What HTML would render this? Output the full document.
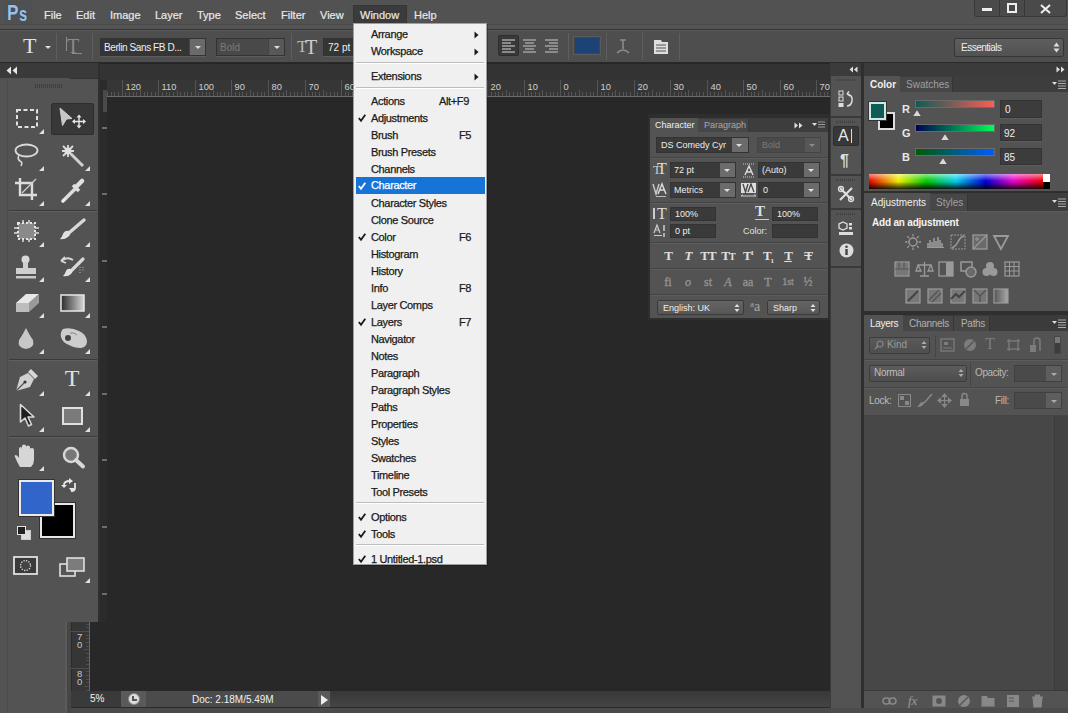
<!DOCTYPE html>
<html><head><meta charset="utf-8">
<style>
*{box-sizing:border-box;margin:0;padding:0}
html,body{width:1068px;height:713px;overflow:hidden;background:#535353;font-family:"Liberation Sans",sans-serif;color:#e6e6e6}
.a{position:absolute}
.t{position:absolute;white-space:nowrap;font-size:11px;line-height:12px}
.mb{position:absolute;top:9px;font-size:11px;line-height:13px;color:#e8e8e8;white-space:nowrap;-webkit-text-stroke:0.2px #e8e8e8}
.sep{position:absolute;width:1px;background:#3e3e3e;border-right:1px solid #5e5e5e}
.fld{position:absolute;background:#3c3c3c;border:1px solid #333;box-shadow:0 1px 0 #5c5c5c}
.dd{position:absolute;background:#6a6a6a;border-left:1px solid #444}
.dd:after{content:"";position:absolute;left:50%;top:50%;margin:-1px 0 0 -3px;border-left:3px solid transparent;border-right:3px solid transparent;border-top:3px solid #ddd}
svg{position:absolute;overflow:visible}
</style></head><body>

<!-- ============ MENU BAR ============ -->
<div class="a" style="left:0;top:0;width:1068px;height:29px;background:#525252"></div>
<div class="a" style="left:0;top:24px;width:1068px;height:1px;background:#4a4a4a"></div><div class="a" style="left:0;top:25px;width:1068px;height:4px;background:#545454"></div>
<div class="a" style="left:0;top:29px;width:1068px;height:1px;background:#353535"></div>
<div class="a" style="left:0;top:30px;width:1068px;height:1px;background:#5a5a5a"></div>
<div class="a" style="left:4px;top:1px;width:28px;height:23px;background:rgba(40,60,90,0.08)"></div><div class="a" style="left:7px;top:2px;font:bold 22px/22px 'Liberation Sans',sans-serif;color:#9cc0e8;transform:scaleX(0.78);transform-origin:0 0;text-shadow:0 0 1px #1c3a66">P</div><div class="a" style="left:19px;top:3px;font:bold 21px/21px 'Liberation Sans',sans-serif;color:#9cc0e8;transform:scaleX(0.7);transform-origin:0 0;text-shadow:0 0 1px #1c3a66">s</div>
<div class="mb" style="left:44px">File</div>
<div class="mb" style="left:76px">Edit</div>
<div class="mb" style="left:110px">Image</div>
<div class="mb" style="left:155px">Layer</div>
<div class="mb" style="left:197px">Type</div>
<div class="mb" style="left:235px">Select</div>
<div class="mb" style="left:281px">Filter</div>
<div class="mb" style="left:320px">View</div>
<div class="a" style="left:353px;top:5px;width:54px;height:19px;background:#3b3b3b;border:1px solid #363636"></div>
<div class="mb" style="left:360px">Window</div>
<div class="mb" style="left:414px">Help</div>
<!-- window controls -->
<div class="a" style="left:974px;top:0;width:93px;height:17px;background:#4a4a4a;border:1px solid #383838;border-top:none;border-radius:0 0 3px 3px"></div>
<div class="a" style="left:999px;top:0;width:1px;height:16px;background:#383838"></div>
<div class="a" style="left:1024px;top:0;width:1px;height:16px;background:#383838"></div>
<div class="a" style="left:982px;top:8px;width:10px;height:3px;background:#eee"></div>
<div class="a" style="left:1007px;top:3px;width:10px;height:10px;border:2px solid #eee"></div>
<svg style="left:1040px;top:4px" width="11" height="10"><path d="M1 1L10 9M10 1L1 9" stroke="#eee" stroke-width="2"/></svg>

<!-- ============ OPTIONS BAR ============ -->
<div class="a" style="left:0;top:31px;width:1068px;height:32px;background:#4e4e4e"></div>

<!-- T tool icon -->
<div class="a" style="left:23px;top:35px;font:22px/22px 'Liberation Serif',serif;color:#e0e0e0">T</div>
<div class="a" style="left:45px;top:46px;border-left:3px solid transparent;border-right:3px solid transparent;border-top:3px solid #ddd"></div>
<div class="sep" style="left:56px;top:33px;height:27px"></div>
<div class="a" style="left:67px;top:36px;font:20px/20px 'Liberation Serif',serif;color:#8a8a8a">T</div>
<div class="a" style="left:66px;top:37px;width:1px;height:14px;background:#8a8a8a"></div>
<div class="a" style="left:72px;top:53px;width:10px;height:1px;background:#8a8a8a"></div>
<div class="sep" style="left:92px;top:33px;height:27px"></div>
<!-- font family -->
<div class="fld" style="left:100px;top:38px;width:106px;height:18px;background:#353535"></div>
<div class="t" style="left:104px;top:42px;font-size:10px;letter-spacing:-0.4px;color:#f0f0f0">Berlin Sans FB D...</div>
<div class="dd" style="left:189px;top:39px;width:16px;height:16px"></div>
<!-- bold -->
<div class="fld" style="left:216px;top:38px;width:69px;height:18px;background:#494949"></div>
<div class="t" style="left:220px;top:42px;font-size:10px;color:#7a7a7a">Bold</div>
<div class="dd" style="left:268px;top:39px;width:16px;height:16px;background:#585858"></div>
<div class="sep" style="left:291px;top:33px;height:27px"></div>
<!-- size icon -->
<div class="a" style="left:297px;top:38px;font:17px/17px 'Liberation Serif',serif;color:#bbb">T</div>
<div class="a" style="left:305px;top:37px;font:20px/20px 'Liberation Serif',serif;color:#ccc">T</div>
<div class="fld" style="left:323px;top:38px;width:40px;height:18px;background:#353535"></div>
<div class="t" style="left:328px;top:42px;font-size:10px;color:#f0f0f0">72 pt</div>
<!-- align -->
<div class="a" style="left:498px;top:35px;width:21px;height:21px;background:#383838;border:1px solid #2e2e2e;border-radius:2px"></div>
<svg style="left:502px;top:39px" width="13" height="14"><path d="M0 1H13M0 4H9M0 7H13M0 10H9M0 13H13" stroke="#dcdcdc" stroke-width="1.2"/></svg>
<svg style="left:523px;top:39px" width="13" height="14"><path d="M0 1H13M2 4H11M0 7H13M2 10H11M0 13H13" stroke="#c8c8c8" stroke-width="1.2"/></svg>
<svg style="left:545px;top:39px" width="13" height="14"><path d="M0 1H13M4 4H13M0 7H13M4 10H13M0 13H13" stroke="#c8c8c8" stroke-width="1.2"/></svg>
<div class="sep" style="left:568px;top:33px;height:27px"></div>
<div class="a" style="left:574px;top:37px;width:26px;height:17px;background:#1d4276;border:1px solid #444;box-shadow:0 0 0 1px #5a5a5a"></div>
<div class="sep" style="left:606px;top:33px;height:27px"></div>
<svg style="left:614px;top:38px" width="18" height="18"><path d="M6 2H12M9 2V11M3 15Q9 9 15 15" stroke="#8c8c8c" stroke-width="1.6" fill="none"/></svg>
<div class="sep" style="left:642px;top:33px;height:27px"></div>
<svg style="left:653px;top:39px" width="16" height="16"><path d="M1 1H8L9 3H15V15H1Z" fill="#ddd"/><path d="M3 6H13M3 9H13M3 12H13" stroke="#555" stroke-width="1"/></svg>
<div class="sep" style="left:679px;top:33px;height:27px"></div>
<!-- essentials -->
<div class="a" style="left:954px;top:38px;width:110px;height:19px;background:linear-gradient(#5e5e5e,#515151);border:1px solid #363636;border-radius:2px"></div>
<div class="t" style="left:961px;top:42px;font-size:10px;letter-spacing:-0.5px;color:#eee">Essentials</div>
<svg style="left:1053px;top:42px" width="7" height="11"><path d="M0.5 4.5L3.5 0.5L6.5 4.5ZM0.5 6.5L3.5 10.5L6.5 6.5Z" fill="#ddd"/></svg>
<div class="a" style="left:0;top:62px;width:1068px;height:1px;background:#2a2a2a"></div>

<!-- ============ HEADER STRIP / DOC ============ -->
<div class="a" style="left:0;top:63px;width:1068px;height:15px;background:#3a3a3a"></div>
<div class="a" style="left:98px;top:63px;width:732px;height:17px;background:#333333;border-top:1px solid #262626"></div>
<div class="a" style="left:830px;top:63px;width:238px;height:13px;background:#3b3b3b"></div>
<div class="a" style="left:90px;top:97px;width:740px;height:594px;background:#282828"></div>
<div class="a" style="left:70px;top:78px;width:33px;height:19px;background:#333"></div>
<svg style="left:103px;top:80px" width="727" height="17"><rect width="727" height="17" fill="#363636"/><path d="M0.5 10V16 M4.5 12V16 M8.5 12V16 M11.5 12V16 M15.5 12V16 M19.5 0V17 M22.5 12V16 M26.5 12V16 M30.5 12V16 M33.5 12V16 M37.5 10V16 M41.5 12V16 M44.5 12V16 M48.5 12V16 M52.5 12V16 M55.5 0V17 M59.5 12V16 M63.5 12V16 M66.5 12V16 M70.5 12V16 M74.5 10V16 M77.5 12V16 M81.5 12V16 M84.5 12V16 M88.5 12V16 M92.5 0V17 M95.5 12V16 M99.5 12V16 M103.5 12V16 M106.5 12V16 M110.5 10V16 M114.5 12V16 M117.5 12V16 M121.5 12V16 M125.5 12V16 M128.5 0V17 M132.5 12V16 M136.5 12V16 M139.5 12V16 M143.5 12V16 M147.5 10V16 M150.5 12V16 M154.5 12V16 M158.5 12V16 M161.5 12V16 M165.5 0V17 M169.5 12V16 M172.5 12V16 M176.5 12V16 M180.5 12V16 M183.5 10V16 M187.5 12V16 M191.5 12V16 M194.5 12V16 M198.5 12V16 M202.5 0V17 M205.5 12V16 M209.5 12V16 M212.5 12V16 M216.5 12V16 M220.5 10V16 M223.5 12V16 M227.5 12V16 M231.5 12V16 M234.5 12V16 M238.5 0V17 M242.5 12V16 M245.5 12V16 M249.5 12V16 M253.5 12V16 M256.5 10V16 M260.5 12V16 M264.5 12V16 M267.5 12V16 M271.5 12V16 M275.5 0V17 M278.5 12V16 M282.5 12V16 M286.5 12V16 M289.5 12V16 M293.5 10V16 M297.5 12V16 M300.5 12V16 M304.5 12V16 M308.5 12V16 M311.5 0V17 M315.5 12V16 M319.5 12V16 M322.5 12V16 M326.5 12V16 M330.5 10V16 M333.5 12V16 M337.5 12V16 M340.5 12V16 M344.5 12V16 M348.5 0V17 M351.5 12V16 M355.5 12V16 M359.5 12V16 M362.5 12V16 M366.5 10V16 M370.5 12V16 M373.5 12V16 M377.5 12V16 M381.5 12V16 M384.5 0V17 M388.5 12V16 M392.5 12V16 M395.5 12V16 M399.5 12V16 M403.5 10V16 M406.5 12V16 M410.5 12V16 M414.5 12V16 M417.5 12V16 M421.5 0V17 M425.5 12V16 M428.5 12V16 M432.5 12V16 M436.5 12V16 M439.5 10V16 M443.5 12V16 M447.5 12V16 M450.5 12V16 M454.5 12V16 M457.5 0V17 M461.5 12V16 M465.5 12V16 M468.5 12V16 M472.5 12V16 M476.5 10V16 M479.5 12V16 M483.5 12V16 M487.5 12V16 M490.5 12V16 M494.5 0V17 M498.5 12V16 M501.5 12V16 M505.5 12V16 M509.5 12V16 M512.5 10V16 M516.5 12V16 M520.5 12V16 M523.5 12V16 M527.5 12V16 M531.5 0V17 M534.5 12V16 M538.5 12V16 M542.5 12V16 M545.5 12V16 M549.5 10V16 M553.5 12V16 M556.5 12V16 M560.5 12V16 M564.5 12V16 M567.5 0V17 M571.5 12V16 M575.5 12V16 M578.5 12V16 M582.5 12V16 M585.5 10V16 M589.5 12V16 M593.5 12V16 M596.5 12V16 M600.5 12V16 M604.5 0V17 M607.5 12V16 M611.5 12V16 M615.5 12V16 M618.5 12V16 M622.5 10V16 M626.5 12V16 M629.5 12V16 M633.5 12V16 M637.5 12V16 M640.5 0V17 M644.5 12V16 M648.5 12V16 M651.5 12V16 M655.5 12V16 M659.5 10V16 M662.5 12V16 M666.5 12V16 M670.5 12V16 M673.5 12V16 M677.5 0V17 M681.5 12V16 M684.5 12V16 M688.5 12V16 M692.5 12V16 M695.5 10V16 M699.5 12V16 M703.5 12V16 M706.5 12V16 M710.5 12V16 M713.5 0V17 M717.5 12V16 M721.5 12V16 M724.5 12V16" stroke="#555555" stroke-width="1"/><rect y="16" width="727" height="1" fill="#6c6c6c"/><g font-family="Liberation Sans" font-size="9.3" fill="#d0d0d0"><text x="22.5" y="9.6">120</text><text x="58.5" y="9.6">110</text><text x="95.5" y="9.6">100</text><text x="131.5" y="9.6">90</text><text x="168.5" y="9.6">80</text><text x="205.5" y="9.6">70</text><text x="241.5" y="9.6">60</text><text x="278.5" y="9.6">50</text><text x="314.5" y="9.6">40</text><text x="351.5" y="9.6">30</text><text x="387.5" y="9.6">20</text><text x="424.5" y="9.6">10</text><text x="460.5" y="9.6">0</text><text x="497.5" y="9.6">10</text><text x="534.5" y="9.6">20</text><text x="570.5" y="9.6">30</text><text x="607.5" y="9.6">40</text><text x="643.5" y="9.6">50</text><text x="680.5" y="9.6">60</text><text x="716.5" y="9.6">70</text></g></svg>
<svg style="left:71px;top:622px" width="19" height="69"><rect width="19" height="69" fill="#363636"/><rect width="1" height="69" fill="#2a2a2a"/><path d="M15 2.5H18 M15 5.5H18 M0 9.5H19 M15 13.5H18 M15 16.5H18 M15 20.5H18 M15 24.5H18 M13 27.5H18 M15 31.5H18 M15 35.5H18 M15 38.5H18 M15 42.5H18 M0 46.5H19 M15 49.5H18 M15 53.5H18 M15 57.5H18 M15 60.5H18 M13 64.5H18 M15 68.5H18" stroke="#4e4e4e" stroke-width="1"/><rect x="18" width="1" height="69" fill="#666"/><g font-family="Liberation Sans" font-size="9.5" fill="#c8c8c8"><text x="6" y="18.1">7</text><text x="6" y="26.1">0</text><text x="6" y="55.1">8</text><text x="6" y="63.1">0</text></g></svg>
<div class="a" style="left:0;top:622px;width:71px;height:91px;background:#535353"></div>
<div class="a" style="left:65px;top:622px;width:2px;height:91px;background:#5b5b5b"></div>
<div class="a" style="left:67px;top:622px;width:4px;height:91px;background:#464646"></div>
<!-- status bar -->
<div class="a" style="left:71px;top:691px;width:759px;height:17px;background:linear-gradient(#383838,#454545)"></div>
<div class="a" style="left:71px;top:691px;width:50px;height:17px;background:#3a3a3a"></div>
<div class="t" style="left:90px;top:693px;font-size:10px;color:#f2f2f2">5%</div>
<div class="a" style="left:121px;top:691px;width:25px;height:17px;background:#5a5a5a"></div>
<div class="a" style="left:128px;top:693px;width:12px;height:12px;border-radius:50%;background:#ddd;border:1px solid #888"></div>
<div class="a" style="left:132px;top:696px;width:5px;height:5px;border-left:2px solid #555;border-bottom:2px solid #555"></div>
<div class="a" style="left:146px;top:691px;width:172px;height:17px;background:#4b4b4b"></div>
<div class="t" style="left:192px;top:694px;font-size:10px;color:#f0f0f0">Doc: 2.18M/5.49M</div>
<div class="a" style="left:318px;top:691px;width:12px;height:17px;background:#5a5a5a"></div>
<div class="a" style="left:321px;top:695px;border-top:5px solid transparent;border-bottom:5px solid transparent;border-left:7px solid #eee"></div>
<div class="a" style="left:71px;top:707px;width:759px;height:1px;background:#2a2a2a"></div>
<div class="a" style="left:71px;top:708px;width:759px;height:5px;background:#4a4a4a"></div>

<!-- ============ TOOLBAR ============ -->
<div class="a" style="left:0;top:79px;width:98px;height:543px;background:#535353"></div>
<div class="a" style="left:7px;top:79px;width:1px;height:634px;background:#4b4b4b"></div>
<div class="a" style="left:98px;top:63px;width:2px;height:559px;background:#2f2f2f"></div>
<div class="a" style="left:100px;top:80px;width:7px;height:542px;background:#2b2b2b"></div>
<div class="a" style="left:103px;top:90px;width:4px;height:22px;background:#4a4a4a"></div>
<div class="a" style="left:102px;top:127px;width:5px;height:2px;background:#6e6e6e"></div>
<div class="a" style="left:102px;top:193px;width:5px;height:2px;background:#6e6e6e"></div>
<div class="a" style="left:102px;top:260px;width:5px;height:2px;background:#6e6e6e"></div>
<div class="a" style="left:102px;top:326px;width:5px;height:2px;background:#6e6e6e"></div>
<div class="a" style="left:102px;top:393px;width:5px;height:2px;background:#6e6e6e"></div>
<div class="a" style="left:102px;top:459px;width:5px;height:2px;background:#6e6e6e"></div>
<div class="a" style="left:102px;top:526px;width:5px;height:2px;background:#6e6e6e"></div>
<div class="a" style="left:102px;top:593px;width:5px;height:2px;background:#6e6e6e"></div>
<svg style="left:6px;top:66px" width="12" height="9"><path d="M5 0.5L0.5 4.5L5 8.5ZM11 0.5L6.5 4.5L11 8.5Z" fill="#e8e8e8"/></svg>
<svg style="left:35px;top:84px" width="28" height="4"><path d="M0 1H28M0 3H28" stroke="#2c2c2c" stroke-width="1" stroke-dasharray="1 1"/></svg>
<!-- separators -->
<div class="a" style="left:9px;top:210px;width:88px;height:1px;background:#3a3a3a"></div>
<div class="a" style="left:9px;top:211px;width:88px;height:1px;background:#606060"></div>
<div class="a" style="left:9px;top:359px;width:88px;height:1px;background:#3a3a3a"></div>
<div class="a" style="left:9px;top:360px;width:88px;height:1px;background:#606060"></div>
<div class="a" style="left:9px;top:436px;width:88px;height:1px;background:#3a3a3a"></div>
<div class="a" style="left:9px;top:437px;width:88px;height:1px;background:#606060"></div>
<!-- marquee -->
<svg style="left:16px;top:109px" width="22" height="19"><rect x="1" y="1" width="20" height="17" fill="#4a4a4a" stroke="#e0e0e0" stroke-width="2" stroke-dasharray="4 2.5"/></svg>
<!-- move selected -->
<div class="a" style="left:51px;top:103px;width:43px;height:32px;background:#383838;border:1px solid #2e2e2e;border-radius:2px"></div>
<svg style="left:58px;top:107px" width="28" height="22"><path d="M2 1L14 11.5L8.5 12L4.5 18.5Z" fill="#c8c8c8" stroke="#d0d0d0" stroke-width="1" stroke-linejoin="round"/><path d="M21 9V20M15.5 14.5H26.5" stroke="#e6e6e6" stroke-width="1.4"/><path d="M21 7.5L18.5 10.5H23.5ZM21 21.5L18.5 18.5H23.5ZM14 14.5L17 12V17ZM28 14.5L25 12V17Z" fill="#e6e6e6"/></svg>
<!-- lasso -->
<svg style="left:14px;top:143px" width="26" height="24"><ellipse cx="12.5" cy="7.5" rx="11" ry="6" fill="none" stroke="#d8d8d8" stroke-width="1.8"/><path d="M5 12Q3 16 6 18Q9 19 7 23" fill="none" stroke="#d8d8d8" stroke-width="1.6"/></svg>
<!-- magic wand -->
<svg style="left:59px;top:143px" width="27" height="25"><path d="M9 2V14M3 8H15M4 3L14 13M14 3L4 13" stroke="#dcdcdc" stroke-width="1.8"/><circle cx="9" cy="8" r="3.5" fill="#e0e0e0"/><path d="M12 11L24 23" stroke="#d0d0d0" stroke-width="3"/></svg>
<!-- crop -->
<svg style="left:14px;top:177px" width="24" height="24"><path d="M6 1V18H23M1 6H18V23" fill="none" stroke="#dcdcdc" stroke-width="2.4"/><path d="M8 16L22 2" stroke="#cfcfcf" stroke-width="1.3"/></svg>
<!-- eyedropper -->
<svg style="left:60px;top:179px" width="25" height="24"><path d="M3 22L15 10" stroke="#dcdcdc" stroke-width="3.5" stroke-linecap="round"/><path d="M2 23L5 20" stroke="#eee" stroke-width="2"/><path d="M13 6L19 12" stroke="#e0e0e0" stroke-width="3.5"/><path d="M17 7L22 2" stroke="#e0e0e0" stroke-width="4.5" stroke-linecap="round"/></svg>
<!-- healing / patch -->
<svg style="left:14px;top:220px" width="25" height="22"><rect x="4" y="3" width="17" height="16" fill="#8a8a8a"/><path d="M4 3H21V19H4Z" fill="none" stroke="#e6e6e6" stroke-width="2" stroke-dasharray="2 2"/><path d="M0 8H4M0 13H4M21 8H25M21 13H25M9 0V3M15 0V3M9 19V22M15 19V22" stroke="#dedede" stroke-width="1.5"/></svg>
<!-- brush -->
<svg style="left:59px;top:219px" width="27" height="23"><path d="M11 13L25 1" stroke="#d8d8d8" stroke-width="3.4" stroke-linecap="round"/><path d="M1 20Q5 21 9 18Q13 15 10 12Q6 11 4 15Q3 18 1 20Z" fill="#e0e0e0"/></svg>
<!-- stamp -->
<svg style="left:15px;top:255px" width="22" height="25"><circle cx="10.5" cy="4.5" r="4" fill="#d8d8d8"/><rect x="8" y="7" width="5" height="7" fill="#d0d0d0"/><rect x="1" y="13" width="20" height="6" fill="#cfcfcf"/><rect x="1" y="21" width="20" height="2.5" fill="#c8c8c8"/></svg>
<!-- history brush -->
<svg style="left:60px;top:255px" width="26" height="24"><path d="M1 6Q7 1 13 5M1 6L5 2M1 6L6 8" fill="none" stroke="#d8d8d8" stroke-width="1.8"/><path d="M12 15L23 4" stroke="#d8d8d8" stroke-width="3.2" stroke-linecap="round"/><path d="M3 21Q8 22 11 19Q14 16 11 14Q7 13 6 16Q5 19 3 21Z" fill="#e0e0e0"/><path d="M20 12V19M23 12V17" stroke="#bbb" stroke-width="1" stroke-dasharray="1 1.5"/></svg>
<!-- eraser -->
<svg style="left:15px;top:292px" width="25" height="21"><path d="M1 11L11 2H24L14 11Z" fill="#e8e8e8"/><path d="M1 11H14V20H1Z" fill="#bdbdbd"/><path d="M14 11L24 2V11L14 20Z" fill="#9a9a9a"/></svg>
<!-- gradient -->
<svg style="left:60px;top:294px" width="25" height="18"><defs><linearGradient id="gr" x1="0" x2="1"><stop offset="0" stop-color="#2a2a2a"/><stop offset="1" stop-color="#d8d8d8"/></linearGradient></defs><rect x="1" y="1" width="23" height="16" fill="url(#gr)" stroke="#e0e0e0" stroke-width="1.6"/></svg>
<!-- blur drop -->
<svg style="left:16px;top:327px" width="20" height="23"><path d="M10 1Q14 9 17 13Q19 21 10 22Q1 21 3 13Q6 9 10 1Z" fill="#c8c8c8"/></svg>
<!-- dodge / sponge -->
<svg style="left:59px;top:327px" width="29" height="22"><path d="M4 2Q12 0 20 4Q27 7 28 14Q28 20 22 21Q15 21 10 18Q3 15 2 10Q1 5 4 2Z" fill="#cdcdcd"/><circle cx="9" cy="11" r="3" fill="#444"/><path d="M11 6Q15 5 18 8" stroke="#888" stroke-width="1" fill="none"/></svg>
<!-- pen -->
<svg style="left:15px;top:368px" width="24" height="24"><path d="M16 1L23 8L20 11L13 4Z" fill="#d8d8d8"/><path d="M13 5L19 11L15 19L1 23L5 9Z" fill="#d0d0d0"/><path d="M1 23L9 15" stroke="#555" stroke-width="1.2"/><circle cx="10" cy="14" r="1.6" fill="#333"/></svg>
<!-- type -->
<div class="a" style="left:61px;top:366px;font:24px/24px 'Liberation Serif',serif;color:#e0e0e0;width:22px;text-align:center">T</div>
<!-- path select -->
<svg style="left:19px;top:403px" width="17" height="24"><path d="M1.5 1.5V19L6 15L9.5 23L12.5 21.5L9 14H15Z" fill="#1e1e1e" stroke="#d8d8d8" stroke-width="1.6" stroke-linejoin="round"/></svg>
<!-- rectangle -->
<svg style="left:62px;top:407px" width="21" height="18"><rect x="1" y="1" width="19" height="16" fill="#7a7a7a" stroke="#e0e0e0" stroke-width="2"/></svg>
<!-- hand -->
<svg style="left:14px;top:444px" width="24" height="24"><path d="M6 23Q3 18 1 13Q0 11 2 11Q4 12 5 14V5Q5 3 7 3Q8 3 8 5V11V2Q8 0.5 10 0.5Q12 0.5 12 2V11V3Q12 1.5 14 1.5Q16 1.5 16 3V11V5Q16 4 18 4Q20 4 20 6V16Q20 20 17 23Z" fill="#d6d6d6"/></svg>
<!-- zoom -->
<svg style="left:62px;top:446px" width="23" height="22"><circle cx="9" cy="9" r="7" fill="#777" stroke="#d8d8d8" stroke-width="2.4"/><path d="M14 14L21 20.5" stroke="#d8d8d8" stroke-width="4" stroke-linecap="round"/></svg>
<!-- colors -->
<svg style="left:61px;top:478px" width="17" height="16"><path d="M3 7Q3 3 9 3" fill="none" stroke="#e6e6e6" stroke-width="1.8"/><path d="M8 0L12 3L8 6Z" fill="#e6e6e6"/><path d="M14 5V10Q14 13 10 13" fill="none" stroke="#e6e6e6" stroke-width="1.8"/><path d="M11 10L14 14L17 10Z" fill="#e6e6e6" transform="translate(-3 0)"/><path d="M0 7L3 10L6 7Z" fill="#e6e6e6"/></svg>
<div class="a" style="left:40px;top:503px;width:35px;height:35px;background:#000;border:2px solid #e8e8e8;box-shadow:0 0 0 1px #333"></div>
<div class="a" style="left:19px;top:480px;width:35px;height:36px;background:#3265c9;border:2px solid #eaeaea;box-shadow:0 0 0 1px #333"></div>
<svg style="left:16px;top:525px" width="16" height="16"><rect x="5.5" y="5.5" width="9" height="9" fill="#ddd" stroke="#ccc"/><rect x="1.5" y="1.5" width="8" height="8" fill="#222" stroke="#e0e0e0"/></svg>
<!-- quick mask -->
<svg style="left:13px;top:556px" width="25" height="19"><rect x="1" y="1" width="23" height="17" fill="#3a3a3a" stroke="#e0e0e0" stroke-width="1.8"/><circle cx="12.5" cy="9.5" r="5" fill="#444" stroke="#ddd" stroke-width="1.3" stroke-dasharray="1.3 1.3"/></svg>
<!-- screen mode -->
<svg style="left:59px;top:557px" width="26" height="20"><rect x="1" y="7" width="15" height="12" fill="#555" stroke="#e0e0e0" stroke-width="1.6"/><rect x="8" y="1" width="17" height="13" fill="#7c7c7c" stroke="#e0e0e0" stroke-width="1.6"/></svg>
<svg style="left:39px;top:129px" width="5" height="5"><path d="M5 0V5H0Z" fill="#e0e0e0"/></svg>
<svg style="left:39px;top:166px" width="5" height="5"><path d="M5 0V5H0Z" fill="#e0e0e0"/></svg>
<svg style="left:85px;top:166px" width="5" height="5"><path d="M5 0V5H0Z" fill="#e0e0e0"/></svg>
<svg style="left:39px;top:201px" width="5" height="5"><path d="M5 0V5H0Z" fill="#e0e0e0"/></svg>
<svg style="left:85px;top:201px" width="5" height="5"><path d="M5 0V5H0Z" fill="#e0e0e0"/></svg>
<svg style="left:39px;top:242px" width="5" height="5"><path d="M5 0V5H0Z" fill="#e0e0e0"/></svg>
<svg style="left:85px;top:242px" width="5" height="5"><path d="M5 0V5H0Z" fill="#e0e0e0"/></svg>
<svg style="left:39px;top:277px" width="5" height="5"><path d="M5 0V5H0Z" fill="#e0e0e0"/></svg>
<svg style="left:85px;top:277px" width="5" height="5"><path d="M5 0V5H0Z" fill="#e0e0e0"/></svg>
<svg style="left:39px;top:313px" width="5" height="5"><path d="M5 0V5H0Z" fill="#e0e0e0"/></svg>
<svg style="left:85px;top:313px" width="5" height="5"><path d="M5 0V5H0Z" fill="#e0e0e0"/></svg>
<svg style="left:39px;top:349px" width="5" height="5"><path d="M5 0V5H0Z" fill="#e0e0e0"/></svg>
<svg style="left:85px;top:349px" width="5" height="5"><path d="M5 0V5H0Z" fill="#e0e0e0"/></svg>
<svg style="left:39px;top:391px" width="5" height="5"><path d="M5 0V5H0Z" fill="#e0e0e0"/></svg>
<svg style="left:85px;top:391px" width="5" height="5"><path d="M5 0V5H0Z" fill="#e0e0e0"/></svg>
<svg style="left:39px;top:427px" width="5" height="5"><path d="M5 0V5H0Z" fill="#e0e0e0"/></svg>
<svg style="left:85px;top:427px" width="5" height="5"><path d="M5 0V5H0Z" fill="#e0e0e0"/></svg>
<svg style="left:39px;top:466px" width="5" height="5"><path d="M5 0V5H0Z" fill="#e0e0e0"/></svg>
<svg style="left:85px;top:578px" width="5" height="5"><path d="M5 0V5H0Z" fill="#e0e0e0"/></svg>

<!-- ============ RIGHT ICON COLUMN ============ -->
<div class="a" style="left:830px;top:76px;width:31px;height:637px;background:#535353"></div>
<div class="a" style="left:830px;top:76px;width:1px;height:637px;background:#3a3a3a"></div>
<div class="a" style="left:861px;top:63px;width:3px;height:650px;background:#2f2f2f"></div>
<svg style="left:849px;top:66px" width="9" height="7"><path d="M4 0.5L0.5 3.5L4 6.5ZM8.5 0.5L5 3.5L8.5 6.5Z" fill="#e0e0e0"/></svg>
<svg style="left:1056px;top:66px" width="9" height="7"><path d="M0.5 0.5L4 3.5L0.5 6.5ZM5 0.5L8.5 3.5L5 6.5Z" fill="#e0e0e0"/></svg>
<div class="a" style="left:831px;top:116px;width:30px;height:2px;background:#3a3a3a"></div>
<div class="a" style="left:831px;top:174px;width:30px;height:2px;background:#3a3a3a"></div>
<div class="a" style="left:831px;top:208px;width:30px;height:2px;background:#3a3a3a"></div>
<div class="a" style="left:831px;top:266px;width:30px;height:2px;background:#3a3a3a"></div>
<svg style="left:836px;top:79px" width="20" height="3"><path d="M0 1H20" stroke="#2e2e2e" stroke-width="1" stroke-dasharray="1 1"/></svg><svg style="left:836px;top:121px" width="20" height="3"><path d="M0 1H20" stroke="#2e2e2e" stroke-width="1" stroke-dasharray="1 1"/></svg><svg style="left:836px;top:179px" width="20" height="3"><path d="M0 1H20" stroke="#2e2e2e" stroke-width="1" stroke-dasharray="1 1"/></svg><svg style="left:836px;top:213px" width="20" height="3"><path d="M0 1H20" stroke="#2e2e2e" stroke-width="1" stroke-dasharray="1 1"/></svg>
<svg style="left:838px;top:90px" width="16" height="18"><rect x="1" y="1" width="4" height="4" fill="none" stroke="#ddd"/><rect x="1" y="7" width="4" height="4" fill="none" stroke="#ddd"/><rect x="0.5" y="13" width="5" height="4" fill="#ddd"/><path d="M9 4Q15 5 14 11Q13 16 9 16M9 4L11 1.5M9 4L12 6" fill="none" stroke="#ddd" stroke-width="1.5"/></svg>
<div class="a" style="left:833px;top:126px;width:26px;height:20px;background:#383838;border:1px solid #2e2e2e;border-radius:2px"></div>
<div class="a" style="left:838px;top:128px;font:16px/16px 'Liberation Sans',sans-serif;color:#e8e8e8">A</div>
<div class="a" style="left:851px;top:129px;width:1px;height:14px;background:#ddd"></div>
<div class="a" style="left:840px;top:153px;font:bold 16px/16px 'Liberation Sans',sans-serif;color:#ddd">¶</div>
<svg style="left:838px;top:186px" width="16" height="16"><path d="M2 14L14 2M2 2L14 14" stroke="#ddd" stroke-width="2.2"/><circle cx="3" cy="3" r="2.5" fill="none" stroke="#ddd" stroke-width="1.3"/><circle cx="13" cy="13" r="2.5" fill="none" stroke="#ddd" stroke-width="1.3"/></svg>
<svg style="left:838px;top:221px" width="16" height="15"><path d="M5 1L9 3V7L5 9L1 7V3Z" fill="none" stroke="#ddd" stroke-width="1.3"/><rect x="11" y="2" width="3" height="2.5" fill="#ddd"/><rect x="11" y="6" width="3" height="2.5" fill="#ddd"/><rect x="1" y="11" width="14" height="3" fill="#ddd"/></svg>
<svg style="left:839px;top:243px" width="15" height="15"><circle cx="7.5" cy="7.5" r="7" fill="#ddd"/><rect x="6.3" y="6" width="2.4" height="6" fill="#444"/><circle cx="7.5" cy="3.8" r="1.3" fill="#444"/></svg>

<!-- ============ RIGHT PANELS ============ -->
<div class="a" style="left:864px;top:76px;width:204px;height:637px;background:#535353"></div>
<!-- color -->
<div class="a" style="left:864px;top:76px;width:204px;height:16px;background:#3d3d3d"></div>
<div class="a" style="left:864px;top:76px;width:36px;height:16px;background:#535353"></div>
<div class="a" style="left:900px;top:77px;width:53px;height:15px;background:#474747;border-right:1px solid #363636"></div>
<div class="t" style="left:870px;top:79px;font-size:10px;font-weight:bold;color:#f0f0f0">Color</div>
<div class="t" style="left:906px;top:79px;font-size:10px;color:#a0a0a0">Swatches</div>
<svg style="left:1052px;top:80px" width="14" height="9"><path d="M0 2H5L2.5 5Z" fill="#ddd"/><path d="M6 1H14M6 3.5H14M6 6H14M6 8.5H14" stroke="#aaa" stroke-width="1"/></svg>
<div class="a" style="left:878px;top:112px;width:17px;height:18px;background:#000;border:2px solid #ddd"></div>
<div class="a" style="left:869px;top:102px;width:17px;height:18px;background:#0d5c55;border:2px solid #cfe8e6;box-shadow:0 0 0 1px #333"></div>
<div class="t" style="left:902px;top:103px;font-size:11px;font-weight:bold;color:#e8e8e8">R</div>
<div class="t" style="left:902px;top:127px;font-size:11px;font-weight:bold;color:#e8e8e8">G</div>
<div class="t" style="left:902px;top:151px;font-size:11px;font-weight:bold;color:#e8e8e8">B</div>
<div class="a" style="left:915px;top:100px;width:80px;height:8px;background:linear-gradient(90deg,#0d5c55,#ff5c55);border:1px solid #6a6a6a"></div>
<div class="a" style="left:915px;top:124px;width:80px;height:8px;background:linear-gradient(90deg,#000055,#00ff55);border:1px solid #6a6a6a"></div>
<div class="a" style="left:915px;top:148px;width:80px;height:8px;background:linear-gradient(90deg,#005c00,#005cff);border:1px solid #6a6a6a"></div>
<svg style="left:912px;top:109px" width="10" height="8"><path d="M5 0.5L9.5 7.5H0.5Z" fill="#d8d8d8" stroke="#444" stroke-width="0.8"/></svg>
<svg style="left:940px;top:133px" width="10" height="8"><path d="M5 0.5L9.5 7.5H0.5Z" fill="#d8d8d8" stroke="#444" stroke-width="0.8"/></svg>
<svg style="left:938px;top:157px" width="10" height="8"><path d="M5 0.5L9.5 7.5H0.5Z" fill="#d8d8d8" stroke="#444" stroke-width="0.8"/></svg>
<div class="fld" style="left:1000px;top:100px;width:42px;height:18px"></div>
<div class="fld" style="left:1000px;top:124px;width:42px;height:17px"></div>
<div class="fld" style="left:1000px;top:148px;width:42px;height:17px"></div>
<div class="t" style="left:1005px;top:104px;font-size:10px;color:#eee">0</div>
<div class="t" style="left:1004px;top:128px;font-size:10px;color:#eee">92</div>
<div class="t" style="left:1004px;top:152px;font-size:10px;color:#eee">85</div>
<div class="a" style="left:869px;top:174px;width:174px;height:15px;background:linear-gradient(180deg,rgba(255,255,255,0.55) 0%,rgba(255,255,255,0) 45%,rgba(0,0,0,0) 50%,rgba(0,0,0,0.85) 100%),linear-gradient(90deg,#e00 0%,#ee0 17%,#0c0 33%,#0ce 50%,#00d 67%,#e0c 83%,#e00 100%)"></div>
<div class="a" style="left:1043px;top:174px;width:7px;height:8px;background:#fff"></div>
<div class="a" style="left:1043px;top:182px;width:7px;height:7px;background:#000"></div>
<!-- adjustments -->
<div class="a" style="left:864px;top:191px;width:204px;height:2px;background:#2f2f2f"></div>
<div class="a" style="left:864px;top:193px;width:204px;height:18px;background:#3d3d3d"></div>
<div class="a" style="left:864px;top:193px;width:66px;height:18px;background:#535353"></div>
<div class="a" style="left:930px;top:194px;width:38px;height:17px;background:#474747;border-right:1px solid #363636"></div>
<div class="a" style="left:930px;top:211px;width:138px;height:1px;background:#5c5c5c"></div>
<div class="t" style="left:871px;top:197px;font-size:10px;color:#f0f0f0">Adjustments</div>
<div class="t" style="left:936px;top:197px;font-size:10px;color:#a0a0a0">Styles</div>
<svg style="left:1052px;top:198px" width="14" height="9"><path d="M0 2H5L2.5 5Z" fill="#ddd"/><path d="M6 1H14M6 3.5H14M6 6H14M6 8.5H14" stroke="#aaa" stroke-width="1"/></svg>
<div class="t" style="left:872px;top:217px;font-size:10px;font-weight:bold;letter-spacing:-0.2px;color:#f4f4f4">Add an adjustment</div>
<svg style="left:905px;top:234px" width="16" height="16"><circle cx="8" cy="8" r="4" fill="none" stroke="#9a9a9a" stroke-width="1.5"/><path d="M8 0V2.5M8 13.5V16M0 8H2.5M13.5 8H16M2.3 2.3L4 4M12 12L13.7 13.7M2.3 13.7L4 12M12 4L13.7 2.3" stroke="#9a9a9a" stroke-width="1.3"/></svg><svg style="left:927px;top:234px" width="17" height="16"><path d="M1 13V9M3 13V6M5 13V8M7 13V4M9 13V7M11 13V3M13 13V6M15 13V9" stroke="#9a9a9a" stroke-width="1.6"/><path d="M0 13.5H17" stroke="#9a9a9a"/></svg><svg style="left:950px;top:234px" width="16" height="16"><rect x="1" y="1" width="14" height="14" fill="none" stroke="#9a9a9a" stroke-width="1" stroke-dasharray="2 1"/><path d="M2 14Q6 12 8 8Q10 3 14 2" fill="none" stroke="#9a9a9a" stroke-width="1.6"/></svg><svg style="left:972px;top:234px" width="16" height="16"><rect x="1" y="1" width="14" height="14" fill="#6a6a6a" stroke="#9a9a9a" stroke-width="1.3"/><path d="M1 15L15 1" stroke="#9a9a9a" stroke-width="1.3"/><path d="M3 5H7M5 3V7" stroke="#9a9a9a"/></svg><svg style="left:993px;top:234px" width="16" height="16"><path d="M1 2H15L8 15Z" fill="none" stroke="#9a9a9a" stroke-width="1.8"/></svg><svg style="left:894px;top:261px" width="16" height="16"><rect x="1" y="1" width="14" height="14" fill="#777" stroke="#9a9a9a" stroke-width="1.2"/><path d="M1 8H15M5 1V8M10 1V8" stroke="#555"/></svg><svg style="left:916px;top:261px" width="17" height="16"><path d="M8.5 1V15M4 15H13M2 4H15M2 4L0 10H5ZM15 4L12 10H17Z" fill="none" stroke="#9a9a9a" stroke-width="1.3"/></svg><svg style="left:938px;top:261px" width="16" height="16"><rect x="1" y="1" width="14" height="14" fill="none" stroke="#9a9a9a" stroke-width="1.3"/><rect x="8" y="1" width="7" height="14" fill="#9a9a9a"/></svg><svg style="left:960px;top:261px" width="17" height="17"><rect x="1" y="1" width="11" height="9" fill="none" stroke="#9a9a9a" stroke-width="1.5"/><circle cx="11" cy="11" r="5" fill="#6a6a6a" stroke="#9a9a9a" stroke-width="1.5"/></svg><svg style="left:982px;top:261px" width="16" height="16"><circle cx="8" cy="5" r="4" fill="#9a9a9a"/><circle cx="4.5" cy="11" r="4" fill="#9a9a9a"/><circle cx="11.5" cy="11" r="4" fill="#9a9a9a"/></svg><svg style="left:1004px;top:261px" width="16" height="16"><rect x="1" y="1" width="14" height="14" fill="none" stroke="#9a9a9a" stroke-width="1.2"/><path d="M1 5.5H15M1 10H15M5.5 1V15M10 1V15" stroke="#9a9a9a"/></svg><svg style="left:905px;top:288px" width="16" height="16"><rect x="1" y="1" width="14" height="14" fill="#777" stroke="#9a9a9a" stroke-width="1.2"/><path d="M3 13L13 3" stroke="#444" stroke-width="2"/></svg><svg style="left:927px;top:288px" width="16" height="16"><rect x="1" y="1" width="14" height="14" fill="#777" stroke="#9a9a9a" stroke-width="1.2"/><path d="M2 12L12 2M5 14L14 5" stroke="#555" stroke-width="1.5"/></svg><svg style="left:950px;top:288px" width="16" height="16"><rect x="1" y="1" width="14" height="14" fill="#777" stroke="#9a9a9a" stroke-width="1.2"/><path d="M1 11L6 6L9 9L15 3" stroke="#444" stroke-width="2" fill="none"/></svg><svg style="left:972px;top:288px" width="16" height="16"><rect x="1" y="1" width="14" height="14" fill="#777" stroke="#9a9a9a" stroke-width="1.2"/><path d="M2 2L8 8L14 2M8 8V14" stroke="#555" stroke-width="1.5" fill="none"/></svg><svg style="left:993px;top:288px" width="16" height="16"><defs><linearGradient id="ag"><stop offset="0" stop-color="#555"/><stop offset="1" stop-color="#aaa"/></linearGradient></defs><rect x="1" y="1" width="14" height="14" fill="url(#ag)" stroke="#9a9a9a" stroke-width="1.2"/></svg>
<!-- layers -->
<div class="a" style="left:864px;top:311px;width:204px;height:4px;background:#2f2f2f"></div>
<div class="a" style="left:864px;top:315px;width:204px;height:16px;background:#3b3b3b"></div>
<div class="a" style="left:864px;top:315px;width:39px;height:16px;background:#535353"></div>
<div class="a" style="left:903px;top:316px;width:51px;height:15px;background:#464646;border-right:1px solid #363636"></div>
<div class="a" style="left:954px;top:316px;width:36px;height:15px;background:#464646;border-right:1px solid #363636"></div>
<div class="t" style="left:870px;top:318px;font-size:10px;letter-spacing:-0.3px;color:#f0f0f0">Layers</div>
<div class="t" style="left:909px;top:318px;font-size:10px;letter-spacing:-0.3px;color:#b0b0b0">Channels</div>
<div class="t" style="left:961px;top:318px;font-size:10px;letter-spacing:-0.3px;color:#b0b0b0">Paths</div>
<svg style="left:1052px;top:319px" width="14" height="9"><path d="M0 2H5L2.5 5Z" fill="#ddd"/><path d="M6 1H14M6 3.5H14M6 6H14M6 8.5H14" stroke="#aaa" stroke-width="1"/></svg>
<div class="a" style="left:869px;top:337px;width:61px;height:17px;background:linear-gradient(#5a5a5a,#4e4e4e);border:1px solid #3c3c3c;border-radius:2px"></div>
<svg style="left:874px;top:340px" width="10" height="10"><circle cx="6" cy="4" r="3" fill="none" stroke="#888" stroke-width="1.2"/><path d="M4 6L1 9" stroke="#888" stroke-width="1.5"/></svg>
<div class="t" style="left:887px;top:339px;font-size:10px;color:#9a9a9a">Kind</div>
<svg style="left:921px;top:340px" width="6" height="10"><path d="M0.5 4L3 1L5.5 4ZM0.5 6L3 9L5.5 6Z" fill="#aaa"/></svg>
<div class="a" style="left:935px;top:335px;width:1px;height:22px;background:#454545"></div>
<svg style="left:940px;top:338px" width="15" height="14"><rect x="1" y="1" width="13" height="12" fill="none" stroke="#7c7c7c" stroke-width="1.3"/><rect x="4" y="4" width="4" height="3" fill="#7c7c7c"/><path d="M3 10H12" stroke="#7c7c7c"/></svg>
<svg style="left:963px;top:338px" width="14" height="14"><circle cx="7" cy="7" r="6" fill="#7c7c7c"/><path d="M3 11L11 3" stroke="#555" stroke-width="1.5"/></svg>
<div class="a" style="left:985px;top:336px;font:16px/16px 'Liberation Serif',serif;color:#7c7c7c">T</div>
<svg style="left:1006px;top:338px" width="15" height="14"><rect x="3" y="3" width="9" height="8" fill="none" stroke="#7c7c7c" stroke-width="1.3"/><path d="M1 3H3M12 3H14M1 11H3M12 11H14M3 1V3M12 1V3M3 11V13M12 11V13" stroke="#7c7c7c" stroke-width="1.3"/></svg>
<svg style="left:1029px;top:337px" width="14" height="16"><rect x="1" y="8" width="6" height="7" fill="#7c7c7c"/><path d="M5 8V3Q5 1 8 1Q11 1 11 4V14" fill="none" stroke="#7c7c7c" stroke-width="1.5"/></svg>
<div class="a" style="left:1054px;top:336px;width:7px;height:18px;background:#3c3c3c;border:1px solid #474747"></div>
<div class="a" style="left:1055px;top:337px;width:5px;height:6px;background:#777"></div>
<div class="a" style="left:864px;top:359px;width:204px;height:1px;background:#454545"></div>
<div class="a" style="left:864px;top:360px;width:204px;height:1px;background:#5c5c5c"></div>
<div class="a" style="left:869px;top:365px;width:98px;height:17px;background:linear-gradient(#5c5c5c,#4e4e4e);border:1px solid #3c3c3c;border-radius:2px"></div>
<div class="t" style="left:874px;top:367px;font-size:10px;letter-spacing:-0.3px;color:#bdbdbd">Normal</div>
<svg style="left:958px;top:368px" width="6" height="10"><path d="M0.5 4L3 1L5.5 4ZM0.5 6L3 9L5.5 6Z" fill="#aaa"/></svg>
<div class="a" style="left:970px;top:362px;width:1px;height:24px;background:#454545"></div>
<div class="t" style="left:975px;top:367px;font-size:10px;letter-spacing:-0.4px;color:#b8b8b8">Opacity:</div>
<div class="a" style="left:1014px;top:365px;width:48px;height:17px;background:#4a4a4a;border:1px solid #404040"></div>
<div class="a" style="left:1046px;top:366px;width:15px;height:15px;background:#5e5e5e"></div>
<div class="a" style="left:1051px;top:373px;border-left:3px solid transparent;border-right:3px solid transparent;border-top:3px solid #aaa"></div>
<div class="a" style="left:864px;top:387px;width:204px;height:1px;background:#454545"></div>
<div class="a" style="left:864px;top:388px;width:204px;height:1px;background:#5c5c5c"></div>
<div class="t" style="left:869px;top:395px;font-size:10px;letter-spacing:-0.3px;color:#bdbdbd">Lock:</div>
<svg style="left:898px;top:394px" width="13" height="13"><rect x="0.5" y="0.5" width="12" height="12" fill="none" stroke="#888"/><rect x="2" y="2" width="4" height="4" fill="#888"/><rect x="7" y="7" width="4" height="4" fill="#888"/></svg>
<svg style="left:916px;top:392px" width="17" height="16"><path d="M8 11L16 2" stroke="#888" stroke-width="1.5"/><path d="M1 15Q5 15 7 13Q9 10 7 10Q4 10 3 13Z" fill="#888"/></svg>
<svg style="left:937px;top:393px" width="15" height="15"><path d="M7.5 1V14M1 7.5H14M7.5 1L5.5 3.5H9.5ZM7.5 14L5.5 11.5H9.5ZM1 7.5L3.5 5.5V9.5ZM14 7.5L11.5 5.5V9.5Z" stroke="#888" stroke-width="1.2" fill="#888"/></svg>
<svg style="left:959px;top:392px" width="11" height="15"><rect x="1" y="7" width="9" height="7" fill="#888"/><path d="M3 7V4Q3 1.5 5.5 1.5Q8 1.5 8 4V7" fill="none" stroke="#888" stroke-width="1.5"/></svg>
<div class="t" style="left:995px;top:395px;font-size:10px;letter-spacing:-0.3px;color:#b8b8b8">Fill:</div>
<div class="a" style="left:1014px;top:392px;width:48px;height:17px;background:#4a4a4a;border:1px solid #404040"></div>
<div class="a" style="left:1046px;top:393px;width:15px;height:15px;background:#5e5e5e"></div>
<div class="a" style="left:1051px;top:400px;border-left:3px solid transparent;border-right:3px solid transparent;border-top:3px solid #aaa"></div>
<div class="a" style="left:864px;top:415px;width:204px;height:1px;background:#454545"></div>
<div class="a" style="left:864px;top:416px;width:191px;height:274px;background:#474747"></div>
<div class="a" style="left:1054px;top:416px;width:14px;height:274px;background:#424242;border-left:1px solid #3c3c3c"></div>
<div class="a" style="left:864px;top:690px;width:204px;height:1px;background:#3a3a3a"></div>
<div class="a" style="left:864px;top:691px;width:204px;height:17px;background:#535353"></div>
<div class="a" style="left:864px;top:708px;width:204px;height:2px;background:#333"></div>
<div class="a" style="left:830px;top:708px;width:238px;height:5px;background:#4c4c4c"></div>
<svg style="left:882px;top:696px" width="15" height="10"><rect x="1" y="2" width="7" height="6" rx="3" fill="none" stroke="#888" stroke-width="1.5"/><rect x="7" y="2" width="7" height="6" rx="3" fill="none" stroke="#888" stroke-width="1.5"/></svg>
<div class="a" style="left:908px;top:694px;font:italic 13px/13px 'Liberation Serif',serif;color:#999">fx</div>
<svg style="left:932px;top:695px" width="14" height="12"><rect x="0.5" y="0.5" width="13" height="11" fill="#888"/><circle cx="7" cy="6" r="3" fill="#555"/></svg>
<svg style="left:957px;top:694px" width="14" height="14"><circle cx="7" cy="7" r="6" fill="#888"/><path d="M3 11L11 3" stroke="#555" stroke-width="1.5"/></svg>
<svg style="left:981px;top:695px" width="14" height="12"><path d="M0.5 1H6L7 3H13.5V11.5H0.5Z" fill="#888"/></svg>
<svg style="left:1006px;top:694px" width="14" height="14"><rect x="1" y="1" width="12" height="12" fill="#888"/><path d="M3 4H8M3 7H8" stroke="#555"/></svg>
<svg style="left:1031px;top:694px" width="13" height="14"><path d="M1 3H12M4.5 3V1H8.5V3M2 3L3 13H10L11 3" fill="#888" stroke="#888" stroke-width="1.2"/></svg>

<!-- ============ CHARACTER PANEL ============ -->
<div class="a" style="left:648px;top:114px;width:182px;height:206px;background:#2e2e2e"></div>
<div class="a" style="left:650px;top:118px;width:178px;height:200px;background:#535353"></div>
<div class="a" style="left:650px;top:118px;width:178px;height:14px;background:#3d3d3d"></div>
<div class="a" style="left:650px;top:118px;width:48px;height:14px;background:#535353"></div>
<div class="a" style="left:698px;top:119px;width:51px;height:13px;background:#474747;border-right:1px solid #383838"></div>
<div class="t" style="left:655px;top:120px;font-size:9px;line-height:10px;color:#f0f0f0">Character</div>
<div class="t" style="left:704px;top:120px;font-size:9px;line-height:10px;color:#a8a8a8">Paragraph</div>
<svg style="left:794px;top:122px" width="9" height="7"><path d="M0.5 0.5L4 3.5L0.5 6.5ZM5 0.5L8.5 3.5L5 6.5Z" fill="#e0e0e0"/></svg>
<svg style="left:812px;top:121px" width="13" height="8"><path d="M0 2H5L2.5 5Z" fill="#ddd"/><path d="M6 1H13M6 3.5H13M6 6H13" stroke="#999" stroke-width="1"/></svg>
<div class="a" style="left:656px;top:137px;width:93px;height:16px;background:#3a3a3a;border:1px solid #333"></div><div class="a" style="left:732px;top:138px;width:16px;height:14px;background:#6b6b6b"></div><div class="a" style="left:736px;top:144px;border-left:3px solid transparent;border-right:3px solid transparent;border-top:3px solid #e0e0e0"></div>
<div class="t" style="left:661px;top:140px;font-size:9px;line-height:10px;color:#eee">DS Comedy Cyr</div>
<div class="a" style="left:757px;top:137px;width:64px;height:16px;background:#4a4a4a;border:1px solid #444"></div>
<div class="a" style="left:805px;top:138px;width:15px;height:14px;background:#575757"></div>
<div class="a" style="left:809px;top:144px;border-left:3px solid transparent;border-right:3px solid transparent;border-top:3px solid #8a8a8a"></div>
<div class="t" style="left:762px;top:140px;font-size:9px;line-height:10px;color:#7a7a7a">Bold</div>
<div class="a" style="left:650px;top:157px;width:178px;height:1px;background:#454545"></div>
<div class="a" style="left:650px;top:158px;width:178px;height:1px;background:#5c5c5c"></div>
<div class="a" style="left:653px;top:163px;font:13px/13px 'Liberation Serif',serif;color:#ccc">T</div>
<div class="a" style="left:657px;top:161px;font:16px/16px 'Liberation Serif',serif;color:#ddd">T</div>
<div class="a" style="left:670px;top:162px;width:66px;height:16px;background:#3a3a3a;border:1px solid #333"></div><div class="a" style="left:720px;top:163px;width:15px;height:14px;background:#6b6b6b"></div><div class="a" style="left:724px;top:169px;border-left:3px solid transparent;border-right:3px solid transparent;border-top:3px solid #e0e0e0"></div>
<div class="t" style="left:674px;top:165px;font-size:9px;line-height:10px;color:#eee">72 pt</div>
<svg style="left:742px;top:163px" width="14" height="15"><path d="M1 1H13M1 14H13" stroke="#ccc" stroke-width="1" stroke-dasharray="1 1"/><path d="M3 12L7 3L11 12M5 9H9" fill="none" stroke="#ddd" stroke-width="1.4"/></svg>
<div class="a" style="left:758px;top:162px;width:62px;height:16px;background:#3a3a3a;border:1px solid #333"></div><div class="a" style="left:804px;top:163px;width:15px;height:14px;background:#6b6b6b"></div><div class="a" style="left:808px;top:169px;border-left:3px solid transparent;border-right:3px solid transparent;border-top:3px solid #e0e0e0"></div>
<div class="t" style="left:762px;top:165px;font-size:9px;line-height:10px;color:#eee">(Auto)</div>
<svg style="left:652px;top:182px" width="17" height="16"><path d="M1 2L4 12L7 2" fill="none" stroke="#ccc" stroke-width="1.4"/><path d="M6 12L10 2L14 12M8 8H12" fill="none" stroke="#ddd" stroke-width="1.4"/><path d="M4 14.5H14" stroke="#bbb"/></svg>
<div class="a" style="left:670px;top:182px;width:66px;height:16px;background:#3a3a3a;border:1px solid #333"></div><div class="a" style="left:720px;top:183px;width:15px;height:14px;background:#6b6b6b"></div><div class="a" style="left:724px;top:189px;border-left:3px solid transparent;border-right:3px solid transparent;border-top:3px solid #e0e0e0"></div>
<div class="t" style="left:674px;top:185px;font-size:9px;line-height:10px;color:#eee">Metrics</div>
<svg style="left:740px;top:182px" width="17" height="16"><rect x="1" y="1" width="15" height="10" fill="#ddd"/><path d="M3 2L5.5 10L8 2M8 10L11 2L14 10" fill="none" stroke="#444" stroke-width="1.3"/><path d="M1 14H16M1 14L3 12.5M16 14L14 12.5" stroke="#ccc" stroke-width="1"/></svg>
<div class="a" style="left:758px;top:182px;width:62px;height:16px;background:#3a3a3a;border:1px solid #333"></div><div class="a" style="left:804px;top:183px;width:15px;height:14px;background:#6b6b6b"></div><div class="a" style="left:808px;top:189px;border-left:3px solid transparent;border-right:3px solid transparent;border-top:3px solid #e0e0e0"></div>
<div class="t" style="left:763px;top:185px;font-size:9px;line-height:10px;color:#eee">0</div>
<div class="a" style="left:650px;top:202px;width:178px;height:1px;background:#454545"></div>
<div class="a" style="left:650px;top:203px;width:178px;height:1px;background:#5c5c5c"></div>
<div class="a" style="left:657px;top:206px;font:16px/16px 'Liberation Serif',serif;color:#ddd">T</div>
<div class="a" style="left:653px;top:208px;width:2px;height:11px;border-top:2px solid #ccc;border-bottom:2px solid #ccc;background:#ccc"></div>
<div class="a" style="left:670px;top:207px;width:46px;height:14px;background:#3a3a3a;border:1px solid #333"></div>
<div class="t" style="left:675px;top:209px;font-size:9px;line-height:10px;color:#eee">100%</div>
<div class="a" style="left:755px;top:204px;font:bold 15px/15px 'Liberation Serif',serif;color:#ddd">T</div>
<div class="a" style="left:755px;top:219px;width:14px;height:1px;background:#ccc"></div>
<div class="a" style="left:772px;top:207px;width:46px;height:14px;background:#3a3a3a;border:1px solid #333"></div>
<div class="t" style="left:777px;top:209px;font-size:9px;line-height:10px;color:#eee">100%</div>
<svg style="left:653px;top:223px" width="15" height="15"><path d="M1 10L4 2L7 10M2.5 7H5.5" fill="none" stroke="#ccc" stroke-width="1.2"/><path d="M1 12.5H9" stroke="#ccc"/><path d="M11 2V8M11 10V14" stroke="#ccc" stroke-width="1.5"/></svg>
<div class="a" style="left:670px;top:224px;width:46px;height:14px;background:#3a3a3a;border:1px solid #333"></div>
<div class="t" style="left:675px;top:226px;font-size:9px;line-height:10px;color:#eee">0 pt</div>
<div class="t" style="left:743px;top:226px;font-size:9px;line-height:10px;color:#e0e0e0">Color:</div>
<div class="a" style="left:772px;top:224px;width:46px;height:14px;background:#3a3a3a;border:1px solid #333"></div>
<div class="a" style="left:650px;top:242px;width:178px;height:1px;background:#454545"></div>
<div class="a" style="left:650px;top:243px;width:178px;height:1px;background:#5c5c5c"></div>
<div class="a" style="left:658px;top:249px;width:20px;text-align:center;font:bold 13px/14px 'Liberation Serif',serif;color:#e0e0e0;letter-spacing:-1px">T</div><div class="a" style="left:678px;top:249px;width:20px;text-align:center;font:bold 13px/14px 'Liberation Serif',serif;color:#e0e0e0;letter-spacing:-1px"><i>T</i></div><div class="a" style="left:698px;top:249px;width:20px;text-align:center;font:bold 13px/14px 'Liberation Serif',serif;color:#e0e0e0;letter-spacing:-1px">TT</div><div class="a" style="left:718px;top:249px;width:20px;text-align:center;font:bold 13px/14px 'Liberation Serif',serif;color:#e0e0e0;letter-spacing:-1px">T<span style="font-size:10px">T</span></div><div class="a" style="left:738px;top:249px;width:20px;text-align:center;font:bold 13px/14px 'Liberation Serif',serif;color:#e0e0e0;letter-spacing:-1px">T<span style="font-size:7px;position:relative;top:-5px">1</span></div><div class="a" style="left:758px;top:249px;width:20px;text-align:center;font:bold 13px/14px 'Liberation Serif',serif;color:#e0e0e0;letter-spacing:-1px">T<span style="font-size:7px;position:relative;top:3px">1</span></div><div class="a" style="left:778px;top:249px;width:20px;text-align:center;font:bold 13px/14px 'Liberation Serif',serif;color:#e0e0e0;letter-spacing:-1px"><u>T</u></div><div class="a" style="left:798px;top:249px;width:20px;text-align:center;font:bold 13px/14px 'Liberation Serif',serif;color:#e0e0e0;letter-spacing:-1px"><s>T</s></div><div class="a" style="left:650px;top:268px;width:178px;height:1px;background:#454545"></div><div class="a" style="left:650px;top:269px;width:178px;height:1px;background:#5c5c5c"></div><div class="a" style="left:658px;top:275px;width:20px;text-align:center;font:12px/14px 'Liberation Serif',serif;color:#949494;-webkit-text-stroke:0.3px #949494">fi</div><div class="a" style="left:678px;top:275px;width:20px;text-align:center;font:italic 12px/14px 'Liberation Serif',serif;color:#949494;-webkit-text-stroke:0.3px #949494">o</div><div class="a" style="left:698px;top:275px;width:20px;text-align:center;font:12px/14px 'Liberation Serif',serif;color:#949494;-webkit-text-stroke:0.3px #949494">st</div><div class="a" style="left:718px;top:275px;width:20px;text-align:center;font:italic 12px/14px 'Liberation Serif',serif;color:#949494;-webkit-text-stroke:0.3px #949494">A</div><div class="a" style="left:738px;top:275px;width:20px;text-align:center;font:12px/14px 'Liberation Serif',serif;color:#949494;-webkit-text-stroke:0.3px #949494">aa</div><div class="a" style="left:758px;top:275px;width:20px;text-align:center;font:12px/14px 'Liberation Serif',serif;color:#949494;-webkit-text-stroke:0.3px #949494">T</div><div class="a" style="left:778px;top:275px;width:20px;text-align:center;font:10px/14px 'Liberation Serif',serif;color:#949494;-webkit-text-stroke:0.3px #949494">1st</div><div class="a" style="left:798px;top:275px;width:20px;text-align:center;font:12px/14px 'Liberation Serif',serif;color:#949494;-webkit-text-stroke:0.3px #949494">½</div><div class="a" style="left:650px;top:294px;width:178px;height:1px;background:#454545"></div><div class="a" style="left:650px;top:295px;width:178px;height:1px;background:#5c5c5c"></div>
<div class="a" style="left:657px;top:300px;width:87px;height:15px;background:linear-gradient(#646464,#565656);border:1px solid #3a3a3a;border-radius:2px"></div><svg style="left:734px;top:303px" width="6" height="10"><path d="M0.5 4L3 1L5.5 4ZM0.5 6L3 9L5.5 6Z" fill="#e0e0e0"/></svg>
<div class="t" style="left:663px;top:303px;font-size:9px;line-height:10px;color:#eee">English: UK</div>
<div class="a" style="left:750px;top:299px;font:14px/16px 'Liberation Serif',serif;color:#a8a8a8"><span style="font-size:9px;position:relative;top:-4px">a</span>a</div>
<div class="a" style="left:767px;top:300px;width:53px;height:15px;background:linear-gradient(#646464,#565656);border:1px solid #3a3a3a;border-radius:2px"></div><svg style="left:810px;top:303px" width="6" height="10"><path d="M0.5 4L3 1L5.5 4ZM0.5 6L3 9L5.5 6Z" fill="#e0e0e0"/></svg>
<div class="t" style="left:773px;top:303px;font-size:9px;line-height:10px;color:#eee">Sharp</div>

<!-- ============ WINDOW MENU ============ -->
<div class="a" style="left:353px;top:23px;width:134px;height:542px;background:#f0f0f0;border:1px solid #a0a0a0;box-shadow:1px 1px 0 rgba(0,0,0,0.25)"></div>
<div class="a" style="left:356px;top:177px;width:129px;height:17px;background:#1673d8"></div>
<div class="t" style="left:371px;top:28px;font-size:11px;line-height:13px;letter-spacing:-0.35px;-webkit-text-stroke:0.25px currentColor;color:#1a1a1a">Arrange</div>
<svg style="left:474px;top:31px" width="5" height="8"><path d="M0.5 0.5L4.5 4L0.5 7.5Z" fill="#1a1a1a"/></svg>
<div class="t" style="left:371px;top:45px;font-size:11px;line-height:13px;letter-spacing:-0.35px;-webkit-text-stroke:0.25px currentColor;color:#1a1a1a">Workspace</div>
<svg style="left:474px;top:48px" width="5" height="8"><path d="M0.5 0.5L4.5 4L0.5 7.5Z" fill="#1a1a1a"/></svg>
<div class="a" style="left:356px;top:62px;width:128px;height:1px;background:#bdbdbd"></div><div class="a" style="left:356px;top:63px;width:128px;height:1px;background:#ffffff"></div>
<div class="t" style="left:371px;top:70px;font-size:11px;line-height:13px;letter-spacing:-0.35px;-webkit-text-stroke:0.25px currentColor;color:#1a1a1a">Extensions</div>
<svg style="left:474px;top:73px" width="5" height="8"><path d="M0.5 0.5L4.5 4L0.5 7.5Z" fill="#1a1a1a"/></svg>
<div class="a" style="left:356px;top:87px;width:128px;height:1px;background:#bdbdbd"></div><div class="a" style="left:356px;top:88px;width:128px;height:1px;background:#ffffff"></div>
<div class="t" style="left:371px;top:95px;font-size:11px;line-height:13px;letter-spacing:-0.35px;-webkit-text-stroke:0.25px currentColor;color:#1a1a1a">Actions</div>
<div class="t" style="left:439px;top:95px;font-size:11px;line-height:13px;letter-spacing:-0.35px;-webkit-text-stroke:0.25px currentColor;color:#1a1a1a">Alt+F9</div>
<div class="t" style="left:371px;top:112px;font-size:11px;line-height:13px;letter-spacing:-0.35px;-webkit-text-stroke:0.25px currentColor;color:#1a1a1a">Adjustments</div>
<svg style="left:358px;top:114px" width="8" height="8"><path d="M0.8 4L3 6.8L7.3 0.8" fill="none" stroke="#1a1a1a" stroke-width="1.8"/></svg>
<div class="t" style="left:371px;top:129px;font-size:11px;line-height:13px;letter-spacing:-0.35px;-webkit-text-stroke:0.25px currentColor;color:#1a1a1a">Brush</div>
<div class="t" style="left:459px;top:129px;font-size:11px;line-height:13px;letter-spacing:-0.35px;-webkit-text-stroke:0.25px currentColor;color:#1a1a1a">F5</div>
<div class="t" style="left:371px;top:146px;font-size:11px;line-height:13px;letter-spacing:-0.35px;-webkit-text-stroke:0.25px currentColor;color:#1a1a1a">Brush Presets</div>
<div class="t" style="left:371px;top:163px;font-size:11px;line-height:13px;letter-spacing:-0.35px;-webkit-text-stroke:0.25px currentColor;color:#1a1a1a">Channels</div>
<div class="t" style="left:371px;top:179px;font-size:11px;line-height:13px;letter-spacing:-0.35px;-webkit-text-stroke:0.25px currentColor;color:#ffffff">Character</div>
<svg style="left:358px;top:182px" width="8" height="8"><path d="M0.8 4L3 6.8L7.3 0.8" fill="none" stroke="#ffffff" stroke-width="1.8"/></svg>
<div class="t" style="left:371px;top:197px;font-size:11px;line-height:13px;letter-spacing:-0.35px;-webkit-text-stroke:0.25px currentColor;color:#1a1a1a">Character Styles</div>
<div class="t" style="left:371px;top:214px;font-size:11px;line-height:13px;letter-spacing:-0.35px;-webkit-text-stroke:0.25px currentColor;color:#1a1a1a">Clone Source</div>
<div class="t" style="left:371px;top:231px;font-size:11px;line-height:13px;letter-spacing:-0.35px;-webkit-text-stroke:0.25px currentColor;color:#1a1a1a">Color</div>
<svg style="left:358px;top:233px" width="8" height="8"><path d="M0.8 4L3 6.8L7.3 0.8" fill="none" stroke="#1a1a1a" stroke-width="1.8"/></svg>
<div class="t" style="left:459px;top:231px;font-size:11px;line-height:13px;letter-spacing:-0.35px;-webkit-text-stroke:0.25px currentColor;color:#1a1a1a">F6</div>
<div class="t" style="left:371px;top:248px;font-size:11px;line-height:13px;letter-spacing:-0.35px;-webkit-text-stroke:0.25px currentColor;color:#1a1a1a">Histogram</div>
<div class="t" style="left:371px;top:265px;font-size:11px;line-height:13px;letter-spacing:-0.35px;-webkit-text-stroke:0.25px currentColor;color:#1a1a1a">History</div>
<div class="t" style="left:371px;top:282px;font-size:11px;line-height:13px;letter-spacing:-0.35px;-webkit-text-stroke:0.25px currentColor;color:#1a1a1a">Info</div>
<div class="t" style="left:459px;top:282px;font-size:11px;line-height:13px;letter-spacing:-0.35px;-webkit-text-stroke:0.25px currentColor;color:#1a1a1a">F8</div>
<div class="t" style="left:371px;top:299px;font-size:11px;line-height:13px;letter-spacing:-0.35px;-webkit-text-stroke:0.25px currentColor;color:#1a1a1a">Layer Comps</div>
<div class="t" style="left:371px;top:316px;font-size:11px;line-height:13px;letter-spacing:-0.35px;-webkit-text-stroke:0.25px currentColor;color:#1a1a1a">Layers</div>
<svg style="left:358px;top:318px" width="8" height="8"><path d="M0.8 4L3 6.8L7.3 0.8" fill="none" stroke="#1a1a1a" stroke-width="1.8"/></svg>
<div class="t" style="left:459px;top:316px;font-size:11px;line-height:13px;letter-spacing:-0.35px;-webkit-text-stroke:0.25px currentColor;color:#1a1a1a">F7</div>
<div class="t" style="left:371px;top:333px;font-size:11px;line-height:13px;letter-spacing:-0.35px;-webkit-text-stroke:0.25px currentColor;color:#1a1a1a">Navigator</div>
<div class="t" style="left:371px;top:350px;font-size:11px;line-height:13px;letter-spacing:-0.35px;-webkit-text-stroke:0.25px currentColor;color:#1a1a1a">Notes</div>
<div class="t" style="left:371px;top:367px;font-size:11px;line-height:13px;letter-spacing:-0.35px;-webkit-text-stroke:0.25px currentColor;color:#1a1a1a">Paragraph</div>
<div class="t" style="left:371px;top:384px;font-size:11px;line-height:13px;letter-spacing:-0.35px;-webkit-text-stroke:0.25px currentColor;color:#1a1a1a">Paragraph Styles</div>
<div class="t" style="left:371px;top:401px;font-size:11px;line-height:13px;letter-spacing:-0.35px;-webkit-text-stroke:0.25px currentColor;color:#1a1a1a">Paths</div>
<div class="t" style="left:371px;top:418px;font-size:11px;line-height:13px;letter-spacing:-0.35px;-webkit-text-stroke:0.25px currentColor;color:#1a1a1a">Properties</div>
<div class="t" style="left:371px;top:435px;font-size:11px;line-height:13px;letter-spacing:-0.35px;-webkit-text-stroke:0.25px currentColor;color:#1a1a1a">Styles</div>
<div class="t" style="left:371px;top:452px;font-size:11px;line-height:13px;letter-spacing:-0.35px;-webkit-text-stroke:0.25px currentColor;color:#1a1a1a">Swatches</div>
<div class="t" style="left:371px;top:469px;font-size:11px;line-height:13px;letter-spacing:-0.35px;-webkit-text-stroke:0.25px currentColor;color:#1a1a1a">Timeline</div>
<div class="t" style="left:371px;top:486px;font-size:11px;line-height:13px;letter-spacing:-0.35px;-webkit-text-stroke:0.25px currentColor;color:#1a1a1a">Tool Presets</div>
<div class="a" style="left:356px;top:502px;width:128px;height:1px;background:#bdbdbd"></div><div class="a" style="left:356px;top:503px;width:128px;height:1px;background:#ffffff"></div>
<div class="t" style="left:371px;top:511px;font-size:11px;line-height:13px;letter-spacing:-0.35px;-webkit-text-stroke:0.25px currentColor;color:#1a1a1a">Options</div>
<svg style="left:358px;top:513px" width="8" height="8"><path d="M0.8 4L3 6.8L7.3 0.8" fill="none" stroke="#1a1a1a" stroke-width="1.8"/></svg>
<div class="t" style="left:371px;top:528px;font-size:11px;line-height:13px;letter-spacing:-0.35px;-webkit-text-stroke:0.25px currentColor;color:#1a1a1a">Tools</div>
<svg style="left:358px;top:530px" width="8" height="8"><path d="M0.8 4L3 6.8L7.3 0.8" fill="none" stroke="#1a1a1a" stroke-width="1.8"/></svg>
<div class="a" style="left:356px;top:544px;width:128px;height:1px;background:#bdbdbd"></div><div class="a" style="left:356px;top:545px;width:128px;height:1px;background:#ffffff"></div>
<div class="t" style="left:371px;top:553px;font-size:11px;line-height:13px;letter-spacing:-0.35px;-webkit-text-stroke:0.25px currentColor;color:#1a1a1a">1 Untitled-1.psd</div>
<svg style="left:358px;top:555px" width="8" height="8"><path d="M0.8 4L3 6.8L7.3 0.8" fill="none" stroke="#1a1a1a" stroke-width="1.8"/></svg>
</body></html>
